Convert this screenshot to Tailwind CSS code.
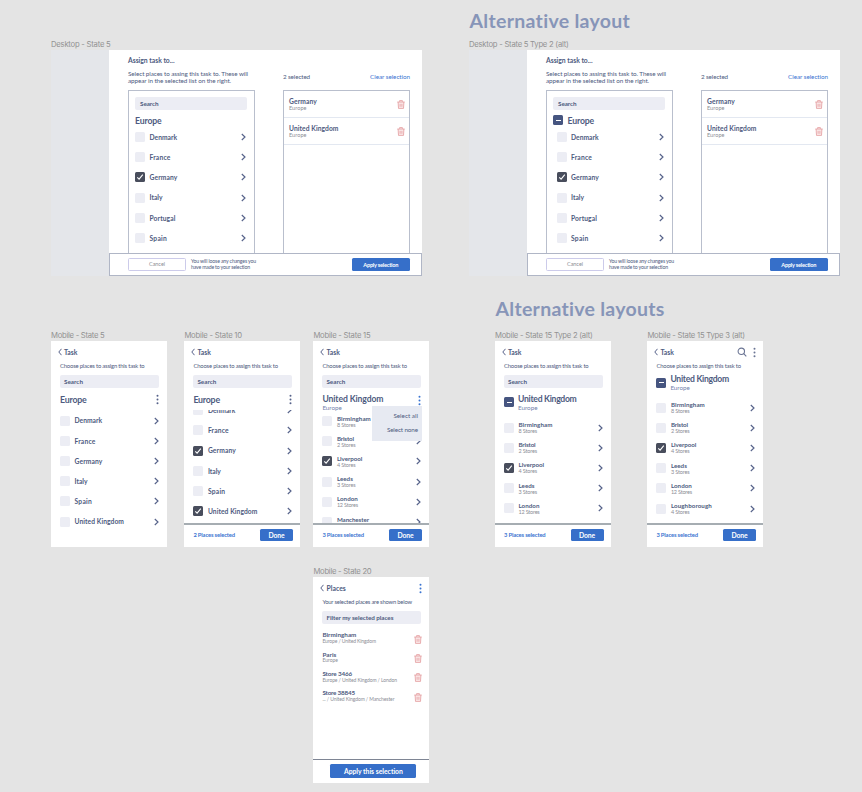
<!DOCTYPE html>
<html lang="en">
<head>
<meta charset="utf-8">
<title>Assign task – layouts</title>
<script src="https://cdn.jsdelivr.net/npm/@tailwindcss/browser@4"></script>
</head>
<body class="bg-[#e4e4e4]">
<main id="canvas" class="relative w-[862px] h-[792px] overflow-hidden font-['Lato',sans-serif] text-[#4e5b80] whitespace-nowrap"></main>
<script>
// Text run with a designed width in pixels
const t = (s, w, cls = '') => `<span data-w="${w}" class="inline-block shrink-0 ${cls}">${s}</span>`;

const chevron = `<svg class="w-[5px] h-[8px] shrink-0" viewBox="0 0 5 8" fill="none" stroke="#56628a" stroke-width="1.15"><path d="M.8 1 4 4 .8 7"/></svg>`;
const back = `<svg class="w-[4px] h-[8px] shrink-0" viewBox="0 0 4 8" fill="none" stroke="#56628a" stroke-width="1"><path d="M3.5.8.8 4l2.7 3.2"/></svg>`;
const trash = `<svg class="w-[8px] h-[9px] shrink-0" viewBox="0 0 8 9" fill="none" stroke="#e39a9d" stroke-width=".8"><path d="M.3 2h7.4M2.6 1.8V.6h2.8v1.2M1.1 2l.4 6.4h5L6.9 2M3.1 3.8v3M4.9 3.8v3" fill="#fbeaea"/></svg>`;
const search = `<svg class="w-[10px] h-[10px] shrink-0" viewBox="0 0 10 10" fill="none" stroke="#6b7594" stroke-width="1.1"><circle cx="4.3" cy="4.3" r="3.2"/><path d="m6.7 6.7 2.6 2.6"/></svg>`;
const dots = (c) => `<svg class="w-[3px] h-[11px] shrink-0" viewBox="0 0 3 11" fill="${c}"><circle cx="1.5" cy="1.7" r="1"/><circle cx="1.5" cy="5.5" r="1"/><circle cx="1.5" cy="9.3" r="1"/></svg>`;
const box = (k) => k === 'check'
  ? `<span class="size-[10px] shrink-0 rounded-[1.5px] bg-[#484d5c]"><svg class="size-[10px]" viewBox="0 0 10 10" fill="none" stroke="#fff" stroke-width="1.1"><path d="m2.3 5.4 1.8 1.8 3.7-4.5"/></svg></span>`
  : k === 'minus'
  ? `<span class="size-[10px] shrink-0 rounded-[1.5px] bg-[#465580] flex items-center justify-center"><i class="block w-[5px] h-[1px] bg-white"></i></span>`
  : `<span class="size-[10px] shrink-0 rounded-[1.5px] bg-[#ecedf4]"></span>`;

const placeW = { Denmark: 27.5, France: 21, Germany: 28, Italy: 13, Portugal: 26, Spain: 17.5, 'United Kingdom': 49.5,
  Birmingham: 34, Bristol: 17, Liverpool: 25.5, Leeds: 16, London: 21, Manchester: 32, Loughborough: 41 };

// One place: checkbox, name, optional store count, chevron
const row = (name, on, sub) => `<div class="flex items-center h-[20.2px] shrink-0">${box(on ? 'check' : '')}
  <div class="ml-[4.5px] flex-1 flex flex-col">${t(name, placeW[name], sub ? 'self-start text-[6.2px] leading-[7px] font-bold' : 'self-start text-[6.7px] leading-[9px] pt-[0.5px] font-bold')}${sub ? t(sub, sub.length > 8 ? 21 : 18.5, 'self-start text-[5.5px] leading-[6px] text-[#8b8d96]') : ''}</div>${chevron}</div>`;

const frame = (x, y, w, h, label, lw, body) => `<section class="absolute" style="left:${x}px;top:${y}px">
  <div class="absolute -top-[10px] left-0 font-['Inter',sans-serif] text-[7.7px] leading-[10px] text-[#929292]">${t(label, lw)}</div>
  <div class="relative overflow-hidden bg-white flex" style="width:${w}px;height:${h}px">${body}</div></section>`;

const chosen = (n, w) => `<div class="h-[27px] shrink-0 border-b border-[#e3e8f1] flex items-center pl-[5px] pr-[4px]">
  <div class="flex-1 flex flex-col">${t(n, w, 'self-start text-[6.7px] leading-[8px] font-bold')}${t('Europe', 17.5, 'self-start text-[5.5px] leading-[7px] text-[#8b8d96]')}</div>${trash}</div>`;

const desktop = (x, label, lw, alt) => frame(x, 50, 371, 226, label, lw, `
  <aside class="w-[58px] shrink-0 bg-[#e4e6ea]"></aside>
  <div class="flex-1 flex flex-col">
    <div class="h-[40px] shrink-0 flex pl-[19px] pr-[12px]">
      <div class="w-[155px] flex flex-col">
        ${t('Assign task to...', 46.5, 'self-start mt-[6px] text-[6.8px] leading-[9px] font-bold')}
        <div class="mt-[4.5px] text-[6.3px] leading-[7.2px]">${t('Select places to assing this task to. These will', 120)}<br>${t('appear in the selected list on the right.', 103)}</div>
      </div>
      <div class="flex-1 flex justify-between pt-[23px] text-[6.3px] leading-[8px]">${t('2 selected', 27)}${t('Clear selection', 40, 'text-[#3b74d1]')}</div>
    </div>
    <div class="flex-1 min-h-0 flex pl-[19px] pr-[12px] gap-[28px] overflow-hidden">
      <div class="w-[127px] h-[175px] shrink-0 border border-[#b9bfcd] px-[6px] pt-[6px] flex flex-col">
        <div class="h-[12.5px] mr-[1px] shrink-0 rounded-[2px] bg-[#ecedf4] flex items-center pl-[5px] text-[6.3px] leading-[8px] pt-[0.5px] font-bold">${t('Search', 18.5)}</div>
        <div class="h-[17.5px] shrink-0 flex items-center gap-[4.5px] pt-[4px] text-[8.7px] leading-[11px] font-bold">${alt ? box('minus') : ''}${t('Europe', 26.5)}</div>
        <div class="flex flex-col pr-[2px] ${alt ? 'pl-[3.5px]' : ''}">${['Denmark', 'France', 'Germany', 'Italy', 'Portugal', 'Spain'].map((n) => row(n, n === 'Germany')).join('')}</div>
      </div>
      <div class="w-[127px] h-[175px] shrink-0 border border-[#b9bfcd]">${chosen('Germany', 28)}${chosen('United Kingdom', 49.5)}</div>
    </div>
    <div class="h-[23px] shrink-0 bg-white border border-[#b0b6c6] flex items-center pl-[18px] pr-[11px]">
      <div class="w-[58px] h-[12.5px] shrink-0 border border-[#cccbea] rounded-[1.5px] flex items-center justify-center text-[5.5px] leading-[7px] text-[#8b8d96]">${t('Cancel', 16)}</div>
      <div class="ml-[5px] flex-1 text-[5.2px] leading-[5.6px]">${t('You will loose any changes you', 65)}<br>${t('have made to your selection', 59)}</div>
      <div class="w-[58.5px] h-[12.5px] shrink-0 bg-[#366fc9] rounded-[1.5px] flex items-center justify-center text-[5.6px] leading-[7px] font-bold text-white">${t('Apply selection', 35)}</div>
    </div>
  </div>`);

const bar = (s, w) => `<div class="h-[12.5px] shrink-0 rounded-[2px] bg-[#ecedf4] flex items-center pl-[4px] pt-[0.5px] text-[6.3px] leading-[8px] font-bold">${t(s, w)}</div>`;

const mobile = (x, y, label, lw, o) => frame(x, y, 116, 205.5, label, lw, `
  <div class="flex-1 flex flex-col">
    <div class="h-[21px] shrink-0 flex items-center pl-[6.5px] pr-[7px] pt-px">
      ${back}<div class="flex-1 ml-[2.5px] text-[6.8px] leading-[9px] font-bold">${t(o.nav || 'Task', o.nav ? 19.5 : 13.5)}</div>
      <div class="flex items-center gap-[6px]">${o.tools || ''}</div>
    </div>
    <div class="flex-1 min-h-0 flex flex-col pl-[9px] pr-[8px]">
      <div class="h-[13px] shrink-0 text-[5.9px] leading-[8px]">${t(o.hint || 'Choose places to assign this task to', o.hint ? 89.5 : 84.5)}</div>
      ${o.body}
    </div>
    ${o.footer || ''}
  </div>${o.over || ''}`);

const foot = (s) => `<div class="h-[24px] shrink-0 border-t-2 border-[#a6adb2] flex items-center justify-between pl-[9px] pr-[7.5px] pb-[1px] text-[5.8px] leading-[8px] font-bold text-[#3b74d1]">${t(s, 41.5)}<div class="w-[33px] h-[12.5px] rounded-[1.5px] bg-[#366fc9] text-white text-[6.8px] flex items-center justify-center">${t('Done', 16)}</div></div>`;
const title = (c) => `<div class="h-[23px] shrink-0 flex items-center justify-between pt-[1px] text-[8.8px] leading-[11px] font-bold">${t('Europe', 26.5)}${dots(c)}</div>`;
const uk = (w) => `<div class="flex flex-col">${t('United Kingdom', w, 'self-start text-[8.6px] leading-[9px] font-bold')}${t('Europe', 19.5, 'self-start text-[6.3px] leading-[7px] text-[#7484ad]')}</div>`;
const stores = [['Birmingham', '8 Stores'], ['Bristol', '2 Stores'], ['Liverpool', '4 Stores'], ['Leeds', '3 Stores'], ['London', '12 Stores'], ['Manchester', '6 Stores'], ['Loughborough', '4 Stores']];
const storeRows = (idx) => idx.map((i) => row(stores[i][0], i === 2, stores[i][1])).join('');
const plain = (names, on) => names.map((n) => row(n, on.includes(n))).join('');
const picked = (n, w, s, sw) => `<div class="h-[19.2px] shrink-0 flex items-center justify-between"><div class="flex flex-col">${t(n, w, 'self-start text-[6.3px] leading-[6.8px] font-bold')}${t(s, sw, 'self-start text-[5px] leading-[5.5px] text-[#8b8d96]')}</div><div class="flex pt-[2px] -mr-[1px]">${trash}</div></div>`;

document.getElementById('canvas').innerHTML = `
  <h1 class="absolute left-[469.5px] top-[9px] text-[19.5px] leading-[24px] font-bold text-[#8795b8]">${t('Alternative layout', 161)}</h1>
  <h1 class="absolute left-[495.5px] top-[297px] text-[19.5px] leading-[24px] font-bold text-[#8795b8]">${t('Alternative layouts', 169.5)}</h1>
  ${desktop(51, 'Desktop - State 5', 59.5, false)}
  ${desktop(469, 'Desktop - State 5 Type 2 (alt)', 99.5, true)}
  ${mobile(51, 341, 'Mobile - State 5', 53.5, {
    body: bar('Search', 19) + title('#56628a') + `<div class="flex flex-col">${plain(['Denmark', 'France', 'Germany', 'Italy', 'Spain', 'United Kingdom'], [])}</div>` })}
  ${mobile(184.4, 341, 'Mobile - State 10', 57.5, {
    body: bar('Search', 19) + title('#56628a') + `<div class="flex-1 min-h-0 overflow-hidden -mt-[1px]"><div class="flex flex-col -mt-[9.4px]">${plain(['Denmark', 'France', 'Germany', 'Italy', 'Spain', 'United Kingdom'], ['Germany', 'United Kingdom'])}</div></div>`,
    footer: foot('2 Places selected') })}
  ${mobile(313.4, 341, 'Mobile - State 15', 57, {
    body: bar('Search', 19) + `<div class="h-[24px] shrink-0 flex justify-between pt-[7px]">${uk(61)}${dots('#3b74d1')}</div><div class="flex-1 min-h-0 overflow-hidden flex flex-col -mt-[0.5px]">${storeRows([0, 1, 2, 3, 4, 5])}</div>`,
    footer: foot('3 Places selected'),
    over: `<div class="absolute left-[58.5px] top-[65px] w-[50px] h-[34.5px] bg-[#e7eaf2] flex flex-col items-end gap-[6px] pt-[6px] pr-[4px] text-[6.3px] leading-[8px]">${t('Select all', 24.5)}${t('Select none', 31)}</div>` })}
  ${mobile(495, 341, 'Mobile - State 15 Type 2 (alt)', 97.5, {
    body: bar('Search', 19) + `<div class="h-[30px] shrink-0 flex gap-[4px] pt-[7px]"><div class="pt-[2.5px] flex items-start">${box('minus')}</div>${uk(58.5)}</div><div class="flex-1 min-h-0 overflow-hidden flex flex-col">${storeRows([0, 1, 2, 3, 4])}</div>`,
    footer: foot('3 Places selected') })}
  ${mobile(647.4, 341, 'Mobile - State 15 Type 3 (alt)', 97.5, {
    tools: search + dots('#6b7594'),
    body: `<div class="h-[22.5px] shrink-0 flex gap-[4px]"><div class="pt-[2.5px] flex items-start">${box('minus')}</div>${uk(58.5)}</div><div class="flex-1 min-h-0 overflow-hidden flex flex-col">${storeRows([0, 1, 2, 3, 4, 6])}</div>`,
    footer: foot('3 Places selected') })}
  ${mobile(313.4, 577.4, 'Mobile - State 20', 58, {
    nav: 'Places', hint: 'Your selected places are shown below', tools: dots('#3b74d1'),
    body: bar('Filter my selected places', 67) + `<div class="flex flex-col pt-[5px]">${picked('Birmingham', 34, 'Europe / United Kingdom', 53.5)}${picked('Paris', 14, 'Europe', 15.5)}${picked('Store 3466', 29.5, 'Europe / United Kingdom / London', 74.5)}${picked('Store 38845', 32.5, '... / United Kingdom / Manchester', 72)}</div>`,
    footer: `<div class="h-[24px] shrink-0 border-t border-[#7e8594] flex items-center justify-center"><div class="w-[86px] h-[14px] ml-[4px] rounded-[1.5px] bg-[#366fc9] text-white text-[6.8px] leading-[9px] font-bold flex items-center justify-center">${t('Apply this selection', 59)}</div></div>` })}
`;

// Spread each run's letters so that it fills its designed width
function fit() {
  const runs = [...document.querySelectorAll('[data-w]')];
  runs.forEach((el) => { el.style.letterSpacing = '0px'; });
  const widths = runs.map((el) => el.getBoundingClientRect().width);
  runs.forEach((el, i) => {
    el.style.letterSpacing = (el.dataset.w - widths[i]) / el.textContent.length + 'px';
  });
}
// Wait until the stylesheet is in force before measuring
function whenStyled() {
  if (getComputedStyle(document.getElementById('canvas')).position === 'relative') fit();
  else requestAnimationFrame(whenStyled);
}
whenStyled();
window.addEventListener('load', fit);
document.fonts.ready.then(whenStyled);
</script>
</body>
</html>
